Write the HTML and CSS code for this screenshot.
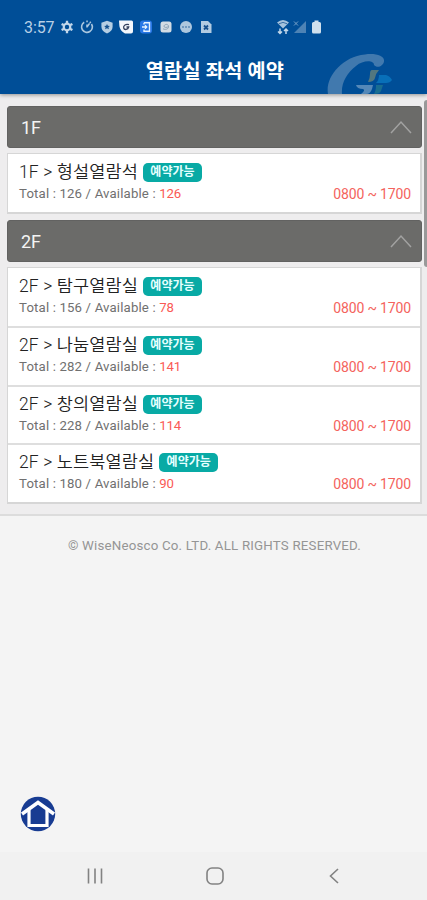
FILE: index.html
```html
<!DOCTYPE html>
<html lang="ko">
<head>
<meta charset="utf-8">
<meta name="viewport" content="width=device-width, initial-scale=1">
<title>열람실 좌석 예약</title>
<link rel="stylesheet" href="styles.css">
</head>
<body>
<header class="top">
  <div class="status">
    <span class="clock">3:57</span>
    <div class="icons">
      <svg viewBox="0 0 14 14"><circle cx="7" cy="7" r="3.3" fill="none" stroke="#c4d8eb" stroke-width="2.2"/><path d="M7 .8v2.4M7 10.8v2.4M1.6 3.9l2.1 1.2M10.3 8.9l2.1 1.2M1.6 10.1l2.1-1.2M10.3 5.1l2.1-1.2" stroke="#c4d8eb" stroke-width="2.3"/></svg>
      <svg viewBox="0 0 14 14"><path d="M4.2 2.3A5.4 5.4 0 1 0 11.500 4M7 7.500V4.500M7 7l2.6-3.6" fill="none" stroke="#abc7df" stroke-width="1.6"/><path d="M6.3 1.4h1.5M9.7 2l1.2.8" stroke="#abc7df" stroke-width="1.6"/></svg>
      <svg viewBox="0 0 14 14"><path d="M7 .7l5.6 2v4c0 3.2-2.2 5.4-5.6 6.8C3.600 12.100 1.400 9.900 1.400 6.700v-4z" fill="#b5cee3"/><path d="M7 4l.9 1.800 2 .2-1.500 1.300.5 2L7 8.300 5.100 9.300l.5-2L4.100 6l2-.2z" fill="#14518f"/></svg>
      <svg viewBox="0 0 14 14"><path d="M0 .5h12.500q1.500 0 1.500 1.500v9.500q0 2-2 2H6C3 12 .5 9 .3 5z" fill="#f3f7fc"/><path d="M10 4.700C7 3.500 4 5.500 4.700 8s4.300 1.700 5-1H7.500" fill="none" stroke="#33405d" stroke-width="1.300"/></svg>
      <svg viewBox="0 0 14 14"><rect x="1" y=".5" width="12" height="13" rx="3" fill="#2877e6"/><path d="M5 2.700h5.500v8.600H5V9.500M5 4.500V2.700M3 7h4.500M6 5.300L7.700 7 6 8.700" fill="none" stroke="#e5f2ff" stroke-width="1.400"/></svg>
      <svg viewBox="0 0 14 14"><rect x="1.500" y="1.500" width="11" height="11" rx="2.500" fill="#d3dce4"/><path d="M4 8.700c2 1.500 6 .5 5.500-2.500S5 4.500 5 6.200s3 1.500 4.500.3" fill="none" stroke="#8ba3b7" stroke-width="1"/></svg>
      <svg viewBox="0 0 14 14"><circle cx="7" cy="7" r="6" fill="#adc7de"/><path d="M3 7h8" stroke="#5b8bb7" stroke-width="1.700" stroke-dasharray="2 1"/></svg>
      <svg viewBox="0 0 14 14"><path d="M2 1h7l3.500 3.500V13H2z" fill="#b2cbe1"/><path d="M5 5.500l4 4M9 5.500l-4 4" stroke="#18518d" stroke-width="1.800"/></svg>
    </div>
    <div class="signals">
      <svg viewBox="0 0 14 16"><path d="M1 3.500Q7-1.500 13 3.500L7 9.500z" fill="#a6c3dd"/><path d="M2.800 4.800Q7 2 11.200 4.800" fill="none" stroke="#3c71a6"/><path d="M4 9.500v5M2 12.500l2 2 2-2M10 15v-5M8 12l2-2 2 2" fill="none" stroke="#c3d8ea" stroke-width="1.500"/></svg>
      <svg viewBox="0 0 14 16"><path d="M13 2v12H1z" fill="#4e83b5"/><path d="M1 2.500l4 4M5 2.500l-4 4" stroke="#76a0c7"/></svg>
      <svg viewBox="0 0 14 16"><path d="M4.500 1.500h4V3h1q1.500 0 1.500 1.500V13q0 1.500-1.500 1.500h-6Q2 14.500 2 13V4.500Q2 3 3.500 3h1z" fill="#d0e0ed"/></svg>
    </div>
  </div>
  <h1>열람실 좌석 예약</h1>
  <svg class="logo" viewBox="0 0 67 40"><path d="M1 40C-2 24 14 3 38 .5c11-1.500 20 1.500 19 7-1 5-7 7-10 3.500 0-5-11-5-18 1C20 19 14 29 15 40z" fill="#4179ae"/><path d="M29 31h17l-1 4c-1 3-3 5-6 5h-5q5-4 2-5-6 0-7-4z" fill="#5588b8"/><path d="M45 16h7q-3 3-4 8-1 4-7 4 2-4 2-8 0-4 2-4z" fill="#52777f"/><path d="M52 21h7q4 1 6 5-2 3-6 3H49q3-3 3-8z" fill="#086fb8"/><path d="M49 31h7l-2 6q-1 3-7 3 2-3 2-9z" fill="#196d91"/></svg>
</header>
<main class="rooms">
  <section>
    <h2 class="floor">1F<svg viewBox="0 0 22 14"><path d="M1 13L11 2l10 11"/></svg></h2>
    <ul class="list">
      <li><div class="name"><span>1F &gt; 형설열람석</span><b>예약가능</b></div><div class="info"><span>Total : 126 / Available : <em>126</em></span><time>0800 ~ 1700</time></div></li>
    </ul>
  </section>
  <section>
    <h2 class="floor">2F<svg viewBox="0 0 22 14"><path d="M1 13L11 2l10 11"/></svg></h2>
    <ul class="list">
      <li><div class="name"><span>2F &gt; 탐구열람실</span><b>예약가능</b></div><div class="info"><span>Total : 156 / Available : <em>78</em></span><time>0800 ~ 1700</time></div></li>
      <li><div class="name"><span>2F &gt; 나눔열람실</span><b>예약가능</b></div><div class="info"><span>Total : 282 / Available : <em>141</em></span><time>0800 ~ 1700</time></div></li>
      <li><div class="name"><span>2F &gt; 창의열람실</span><b>예약가능</b></div><div class="info"><span>Total : 228 / Available : <em>114</em></span><time>0800 ~ 1700</time></div></li>
      <li><div class="name"><span>2F &gt; 노트북열람실</span><b>예약가능</b></div><div class="info"><span>Total : 180 / Available : <em>90</em></span><time>0800 ~ 1700</time></div></li>
    </ul>
  </section>
  <div class="scrollbar"></div>
</main>
<footer>© WiseNeosco Co. LTD. ALL RIGHTS RESERVED.</footer>
<a class="home" aria-label="Home"><svg viewBox="0 0 36 36"><circle cx="18" cy="18" r="17.200" fill="#183c92"/><path d="M2 18L18 6.500 34 18" fill="none" stroke="#fff" stroke-width="3.500"/><path d="M9 14v15.500h18V14" fill="none" stroke="#fff" stroke-width="3.200"/></svg></a>
<nav>
  <svg viewBox="0 0 20 20"><path d="M3.500 2.500v15M10 2.500v15M16.500 2.500v15"/></svg>
  <svg viewBox="0 0 20 20"><rect x="2" y="2" width="16" height="16" rx="5"/></svg>
  <svg viewBox="0 0 20 20"><path d="M14 3L6.500 10l7.500 7"/></svg>
</nav>
</body>
</html>
```
FILE: styles.css
```css
* { box-sizing: border-box; }
body {
  margin: 0;
  height: 900px;
  display: flex;
  flex-direction: column;
  overflow: hidden;
  background: #f4f4f4;
  font-family: Roboto, "Noto Sans CJK KR", sans-serif;
}
.top {
  position: relative;
  z-index: 1;
  height: 94px;
  flex: none;
  background: #004e97;
  box-shadow: 0 1px 4px rgba(0, 0, 0, .4);
}
.status {
  display: flex;
  align-items: center;
  height: 54px;
  padding-left: 24px;
}
.clock {
  width: 36px;
  color: #b8d0e6;
  font-size: 16px;
  letter-spacing: -.1px;
}
.icons { display: flex; gap: 5.800px; }
.icons svg { width: 14px; height: 14px; }
.signals { display: flex; gap: 3px; margin-left: 63px; }
.signals svg { width: 14px; height: 16px; }
h1 {
  margin: 0;
  color: #fff;
  font-size: 19.700px;
  font-weight: 700;
  letter-spacing: .2px;
  line-height: 35px;
  text-align: center;
  padding-left: 3px;
}
.logo {
  position: absolute;
  right: 33px;
  bottom: 0;
  width: 67px;
  height: 40px;
}
.rooms {
  position: relative;
  flex: none;
  height: 422px;
  padding: 12px 5px 0 7px;
  background: #eeedee;
  border-bottom: 2px solid #dcdcdc;
}
.floor {
  display: flex;
  align-items: center;
  justify-content: space-between;
  height: 42px;
  margin: 0 0 5px;
  padding: 0 9px 0 13px;
  border: 1px solid #626261;
  border-radius: 3px;
  background: #6b6b69;
  color: #f4f4f4;
  font-size: 18px;
  font-weight: 400;
}
.floor svg { width: 22px; height: 14px; }
.floor path { fill: none; stroke: #a2a2a1; stroke-width: 1.500; }
.list {
  list-style: none;
  margin: 0 0 6px;
  padding: 0;
  border: 1px solid #d6d6d6;
  border-width: 1px 2px 2px 1px;
  background: #fff;
}
.list li { height: 58.700px; padding: 8px 9px 0 11px; }
.list li:first-child { height: 58px; padding-top: 9px; }
.list li + li { border-top: 2px solid #dedede; }
.name {
  display: flex;
  align-items: center;
  gap: 5px;
  height: 19px;
  color: #222;
  font-size: 17.500px;
  font-weight: 350;
  letter-spacing: .13px;
}
.name span { line-height: 19px; }
.name b {
  width: 59px;
  height: 19px;
  border-radius: 5px;
  background: #08aaa5;
  color: #e6ffff;
  font-size: 12px;
  font-weight: 700;
  letter-spacing: 0;
  line-height: 18px;
  text-align: center;
}
.info {
  display: flex;
  justify-content: space-between;
  height: 22px;
  color: #707070;
  font-size: 13.200px;
  letter-spacing: .16px;
  line-height: 23px;
}
.info em { color: #fa5a55; font-style: normal; letter-spacing: -.2px; }
.info time { color: #f4635d; font-size: 14px; letter-spacing: -.15px; line-height: 25px; }
.scrollbar {
  position: absolute;
  top: 6px;
  right: 0;
  width: 3px;
  height: 167px;
  border-radius: 3px 0 0 3px;
  background: #999;
}
footer {
  margin-top: 20px;
  color: #959595;
  font-size: 13.300px;
  letter-spacing: .19px;
  line-height: 20px;
  text-align: center;
  padding-left: 2px;
}
.home { margin: auto 0 20px 20px; height: 36px; width: 36px; }
.home svg { display: block; }
.home + nav {
  display: flex;
  justify-content: space-between;
  align-items: center;
  height: 48px;
  flex: none;
  padding: 0 83px 0 85px;
  background: #f1f1f1;
}
nav svg { width: 20px; height: 20px; fill: none; stroke: #828282; stroke-width: 1.600; }
```
